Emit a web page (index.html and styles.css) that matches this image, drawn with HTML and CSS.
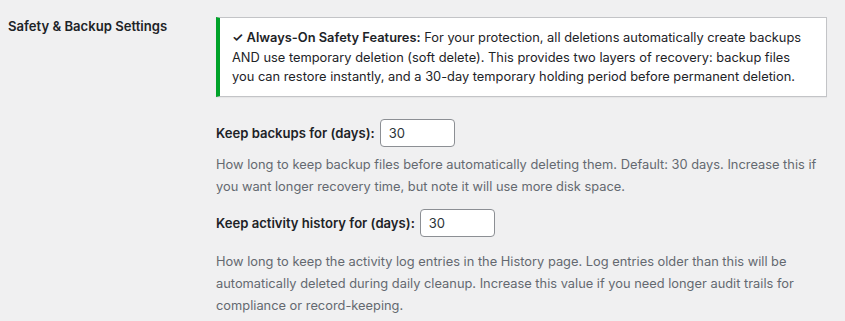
FILE: index.html
```html
<!DOCTYPE html>
<html lang="en">
<head>
  <meta charset="UTF-8">
  <title>Safety &amp; Backup Settings</title>
  <link rel="stylesheet" href="styles.css">
</head>
<body>
  <div class="form-table">
    <div class="row-label">Safety &amp; Backup Settings</div>
    <div class="row-field">
      <div class="notice">
        <p><strong>✓ Always-On Safety Features:</strong> For your protection, all deletions automatically create backups AND use temporary deletion (soft delete). This provides two layers of recovery: backup files you can restore instantly, and a 30-day temporary holding period before permanent deletion.</p>
      </div>

      <div class="field field-backups">
        <label for="backup_days">Keep backups for (days):</label>
        <input type="number" id="backup_days" value="30">
      </div>
      <p class="description">How long to keep backup files before automatically deleting them. Default: 30 days. Increase this if you want longer recovery time, but note it will use more disk space.</p>

      <div class="field field-history">
        <label for="history_days">Keep activity history for (days):</label>
        <input type="number" id="history_days" value="30">
      </div>
      <p class="description description-history">How long to keep the activity log entries in the History page. Log entries older than this will be automatically deleted during daily cleanup. Increase this value if you need longer audit trails for compliance or record-keeping.</p>
    </div>
  </div>
</body>
</html>
```

FILE: styles.css
```css
body {
  margin: 0;
  background: #f0f0f1;
  color: #1d2327;
  font-family: Inter, "Liberation Sans", Arial, sans-serif;
  font-size: 12.85px;
}

.form-table {
  display: flex;
}

.row-label {
  width: 216px;
  flex-shrink: 0;
  box-sizing: border-box;
  padding: 16px 10px 0 8px;
  font-size: 13.1px;
  font-weight: 600;
  line-height: 21px;
}

.row-field {
  flex: 1;
  padding: 17px 18px 0 0;
}

.notice {
  background: #fff;
  border: 1px solid #c3c4c7;
  border-left: 4px solid #00a32a;
  padding: 10px 12px 9px;
  box-shadow: 0 1px 1px rgba(0,0,0,0.04);
}

.notice p {
  margin: 0;
  line-height: 19.5px;
}

.notice strong {
  font-weight: 600;
}

.field {
  display: flex;
  align-items: center;
}

.field-backups {
  margin-top: 22px;
}

.field-history {
  margin-top: 11px;
}

.field label {
  font-size: 13.1px;
  font-weight: 600;
  margin-right: 5px;
}

.field input {
  width: 75px;
  height: 28px;
  box-sizing: border-box;
  padding: 0 8px;
  border: 1px solid #8c8f94;
  border-radius: 4px;
  background: #fff;
  color: #2c3338;
  font-family: inherit;
  font-size: 13px;
  -moz-appearance: textfield;
}

.field input::-webkit-outer-spin-button,
.field input::-webkit-inner-spin-button {
  -webkit-appearance: none;
  margin: 0;
}

.description {
  margin: 7px 0 0;
  color: #646970;
  line-height: 22px;
}

.description-history {
  margin-top: 14px;
}
```
